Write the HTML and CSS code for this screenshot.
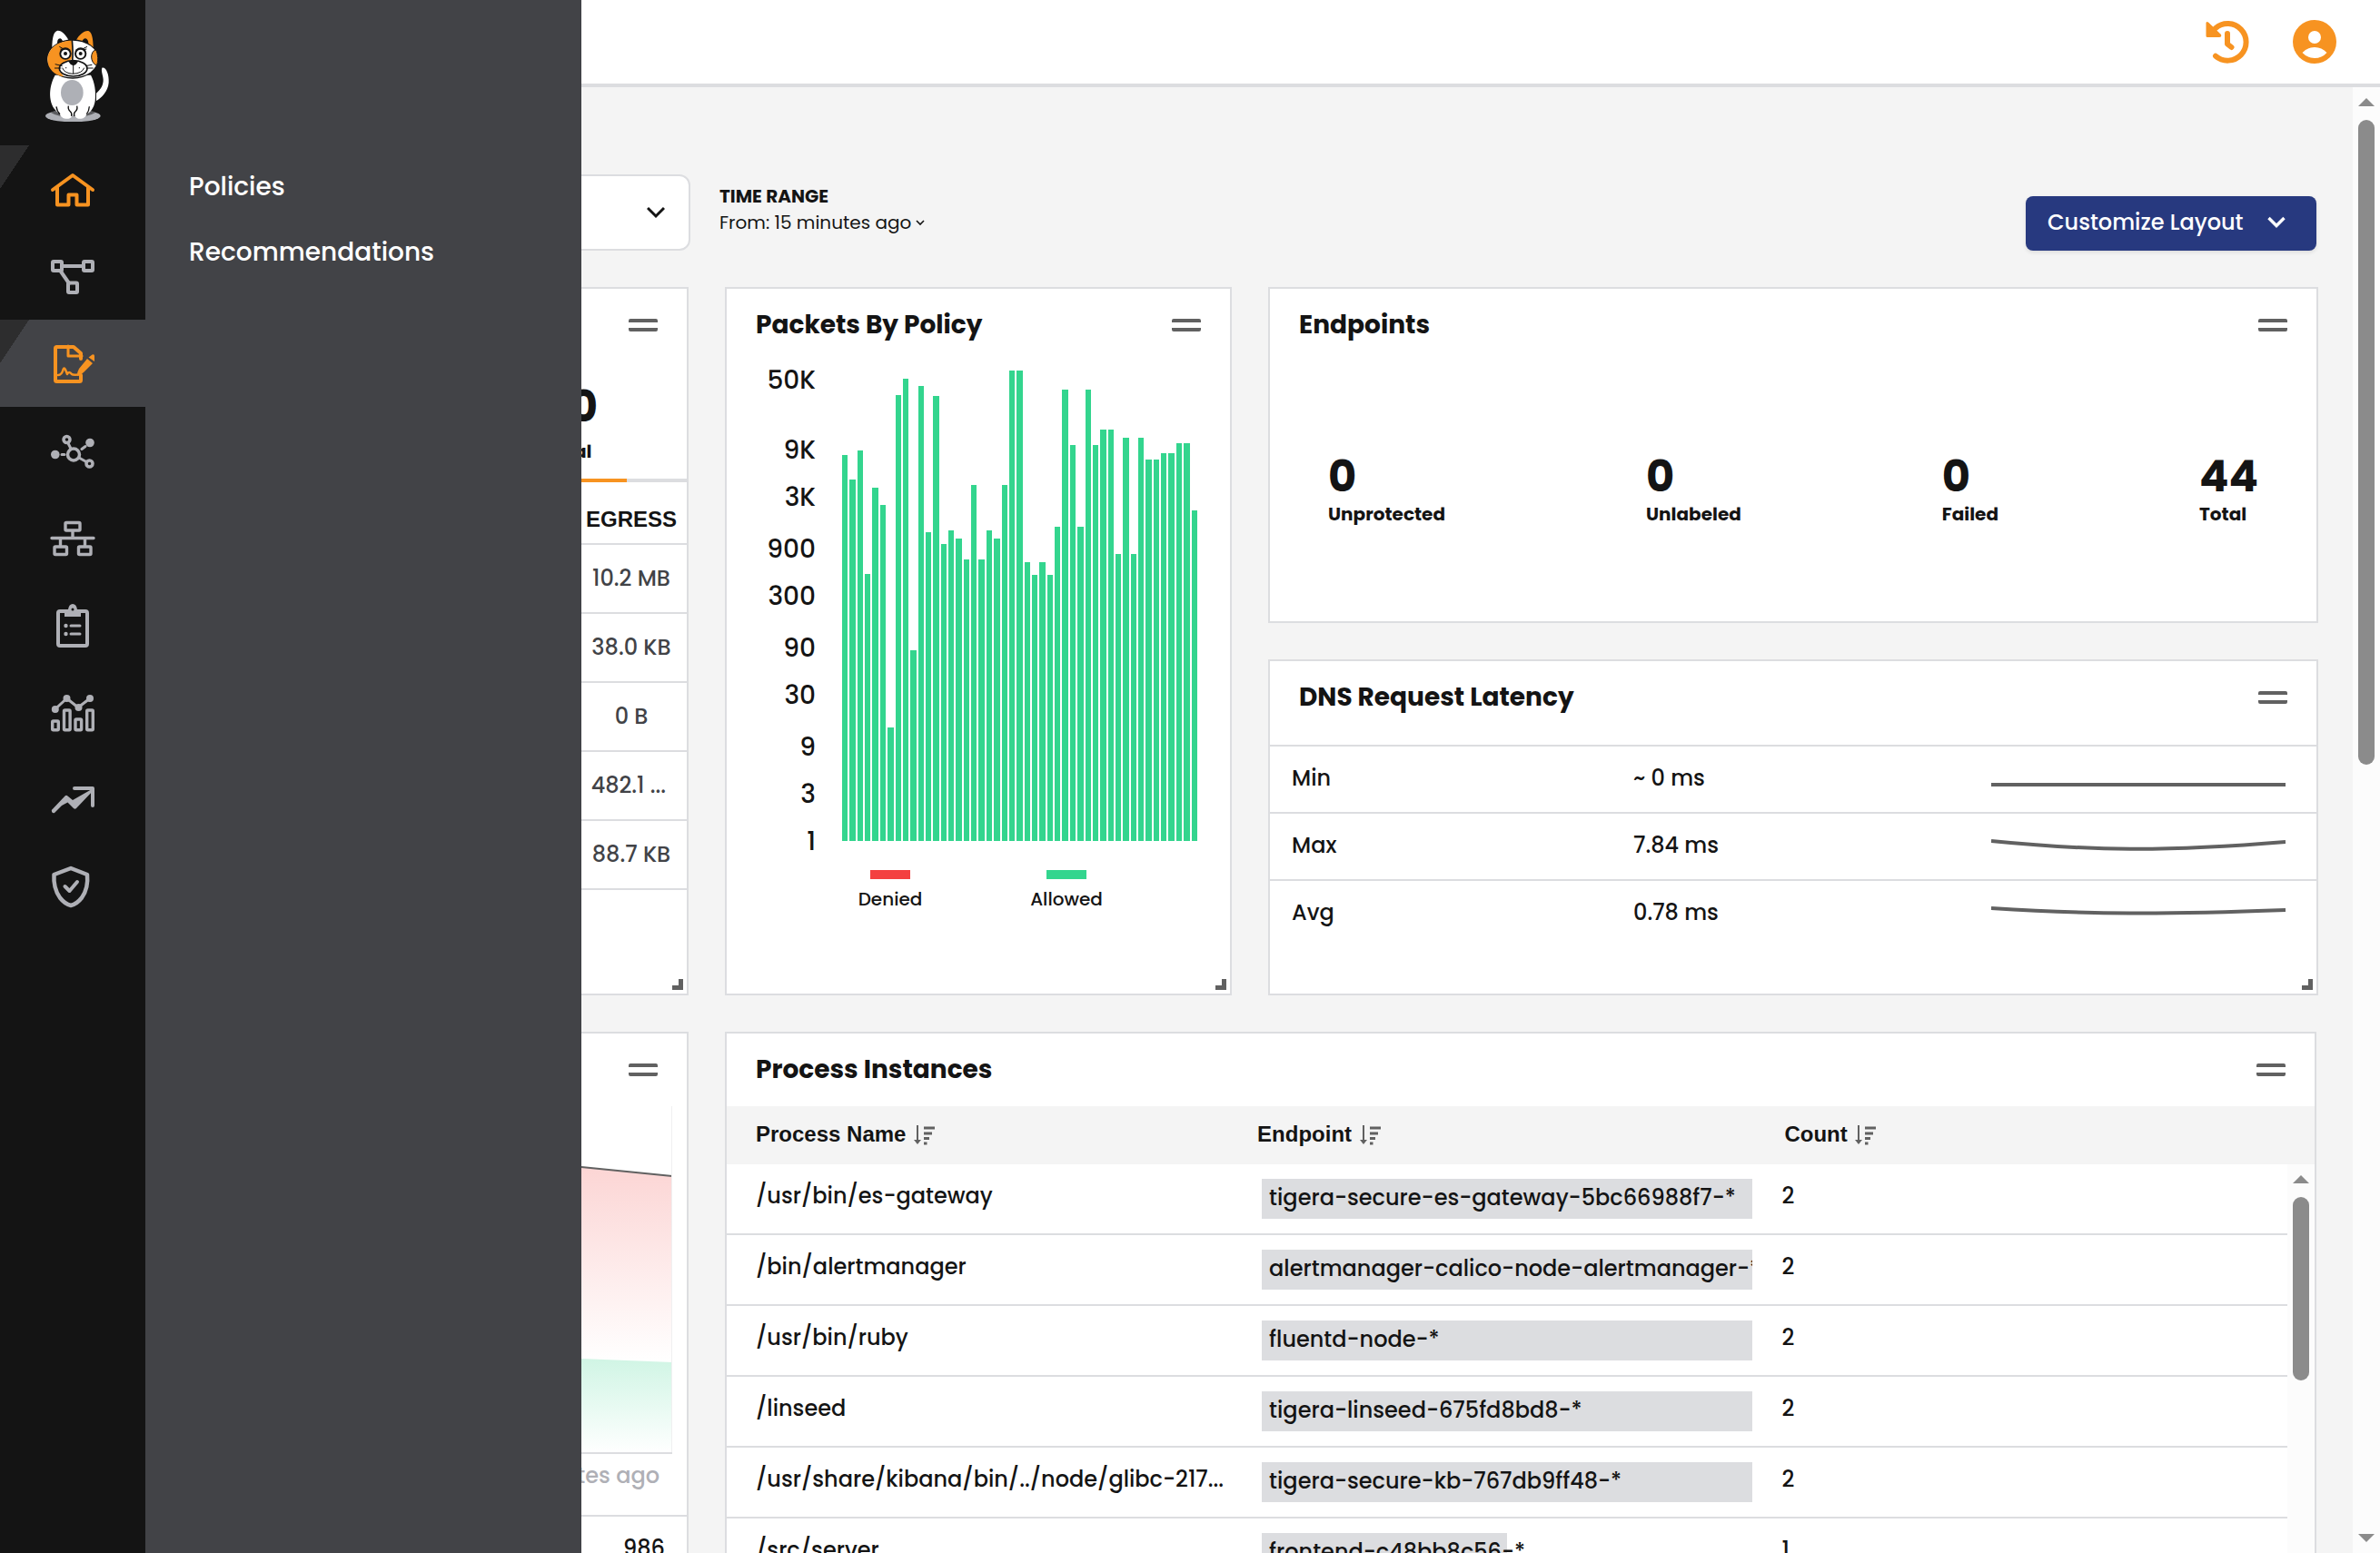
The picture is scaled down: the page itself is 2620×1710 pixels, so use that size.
FILE: index.html
```html
<!DOCTYPE html>
<html lang="en">
<head>
<meta charset="utf-8">
<meta name="viewport" content="width=device-width, initial-scale=1">
<title>Dashboard</title>
<link rel="stylesheet" href="styles.css">
</head>
<body>
<div class="app">
  <nav class="sidebar" aria-label="Main">
    <a class="logo" href="#" aria-label="Calico">
      <svg viewBox="0 0 270 330" width="90" height="110">
        <ellipse cx="121" cy="311" rx="91" ry="20" fill="#aeb0b6"/>
        <path d="M48 300Q60 290 80 300L80 312Q60 308 48 300ZM195 300Q182 290 162 300L162 312Q182 308 195 300Z" fill="#5c5d60"/>
        <path d="M217 152C229 148 241 172 239 201C237 230 214 252 198 261L198 236C213 224 222 208 221 190C220 175 213 163 217 152Z" fill="#fff"/>
        <path d="M62 176C42 210 38 262 62 290C68 298 74 302 78 305C82 322 110 326 118 312L122 308L128 312C136 326 162 322 166 305C178 300 190 286 194 262C198 230 192 198 180 176Z" fill="#fff"/>
        <ellipse cx="118" cy="234" rx="37" ry="42" fill="#aeb0b6"/>
        <path d="M66 280Q68 296 78 305M175 280Q174 296 166 305M106 278Q104 290 112 296Q119 302 116 312M134 278Q137 290 129 296Q122 302 126 312" fill="none" stroke="#141414" stroke-width="4"/>
        <path d="M52 88C52 50 58 34 68 30C82 27 96 42 106 60L88 66C84 54 76 50 70 62L68 78Z" fill="#fff"/>
        <path d="M188 88C188 50 182 34 172 30C158 28 142 42 132 60L150 66C156 52 166 50 171 64L173 78Z" fill="#f79321"/>
        <ellipse cx="120" cy="123" rx="86" ry="65" fill="#141414"/>
        <ellipse cx="120" cy="123" rx="83" ry="61" fill="#fff"/>
        <path d="M117 62C70 62 37 90 37 125C37 155 60 176 90 181L84 172C66 160 76 142 96 138L116 124C120 100 118 80 117 62Z" fill="#f79321"/>
        <path d="M196 92C204 104 206 134 198 144C178 134 176 100 196 92Z" fill="#f79321" stroke="#141414" stroke-width="3"/>
        <path d="M118 60C120 84 122 104 119 126" fill="none" stroke="#141414" stroke-width="5"/>
        <ellipse cx="122" cy="154" rx="46" ry="26" fill="#fff" stroke="#141414" stroke-width="5"/>
        <path d="M106 131Q122 124 138 131Q132 142 122 145Q112 142 106 131Z" fill="#141414"/>
        <path d="M122 143V172M86 152Q92 170 121 172Q152 170 158 152M62 140L86 146M60 153H82M162 146L184 142M164 153H188M76 82L90 90M80 90L92 92M168 82L152 90M166 90L152 92" fill="none" stroke="#141414" stroke-width="3"/>
        <circle cx="96" cy="105" r="20" fill="#141414"/><circle cx="96" cy="106" r="14" fill="#fff"/><circle cx="96" cy="105" r="6" fill="#141414"/>
        <circle cx="146" cy="105" r="20" fill="#141414"/><circle cx="146" cy="106" r="14" fill="#fff"/><circle cx="146" cy="105" r="6" fill="#141414"/>
        <circle cx="98" cy="152" r="2" fill="#141414"/><circle cx="142" cy="152" r="2" fill="#141414"/>
      </svg>
    </a>
    <a class="nav-item is-marked is-accent" href="#" aria-label="Dashboard">
      <svg viewBox="0 0 48 48" class="nav-icon"><path d="M2 25L24 9L46 25M7 22V41.500H19.500V30.500H28.500V41.500H41V22"/></svg>
    </a>
    <a class="nav-item" href="#" aria-label="Service graph">
      <svg viewBox="0 0 48 48" class="nav-icon"><rect x="2" y="8" width="10" height="10" rx="1"/><rect x="36" y="8" width="10" height="10" rx="1"/><rect x="19" y="31.500" width="10" height="10.500" rx="1"/><path d="M13 13H35M11 19L20 32"/></svg>
    </a>
    <a class="nav-item is-marked is-accent is-open" href="#" aria-label="Policies" aria-expanded="true">
      <svg viewBox="0 0 48 48" class="nav-icon"><path d="M33 37V42.500Q33 44 31.500 44H6.500Q5 44 5 42.500V7.500Q5 6 6.500 6H25L33 13V19"/><path d="M19 5V16H34" stroke-width="3"/><path d="M8 37Q12 37 13.500 31Q14.500 28 16 31L18 36Q20 32 23 36Q24 37 30 36.500" stroke-width="2.500"/><path class="solid" d="M29 38Q29 33 31 30L40 19L46 24L36 34Q33 37 29 38ZM41.500 17.500L45.500 14.500Q48 13.500 48 16V22Z"/></svg>
    </a>
    <a class="nav-item" href="#" aria-label="Endpoints">
      <svg viewBox="0 0 48 48" class="nav-icon"><circle cx="25" cy="28.500" r="6.500" stroke-width="3.500"/><circle cx="17.500" cy="12" r="3.500" stroke-width="3.500"/><circle cx="42.500" cy="38.500" r="3.500" stroke-width="3.500"/><circle class="solid" cx="43" cy="15.500" r="4.800"/><circle class="solid" cx="4.800" cy="28.500" r="4.800"/><path d="M19 16L22 22M31 32L39 36.500M12 28.500H15M34 22.500L38 19.500" stroke-width="3"/></svg>
    </a>
    <a class="nav-item" href="#" aria-label="Networks">
      <svg viewBox="0 0 48 48" class="nav-icon"><g stroke-width="3.400"><rect x="16" y="7.500" width="16" height="8.500" rx="1"/><rect x="4" y="34" width="13.500" height="8.500" rx="1"/><rect x="30.500" y="34" width="13.500" height="8.500" rx="1"/><path d="M1 24.500H47M24 17V24M10.500 25V33M37.500 25V33"/></g></svg>
    </a>
    <a class="nav-item" href="#" aria-label="Compliance">
      <svg viewBox="0 0 48 48" class="nav-icon"><rect x="8" y="9" width="32" height="38" rx="2"/><path class="solid" d="M15 7H19Q20 1 24 1Q28 1 29 7H33V15H15Z"/><circle cx="24" cy="7" r="1.500" fill="#141414" stroke="none"/><circle class="solid" cx="16.500" cy="25" r="2.200"/><circle class="solid" cx="16.500" cy="34" r="2.200"/><path d="M22 25H32M22 34H32" stroke-width="3"/></svg>
    </a>
    <a class="nav-item" href="#" aria-label="Activity">
      <svg viewBox="0 0 48 48" class="nav-icon"><path d="M4.500 21L17.500 9L30 19L43 9" stroke-width="3"/><g class="solid"><circle cx="4.800" cy="21" r="4"/><circle cx="17.500" cy="9" r="4"/><circle cx="30.500" cy="19" r="4"/><circle cx="43" cy="9" r="4"/></g><g stroke-width="3.400"><rect x="1.700" y="34" width="6.600" height="9.800" rx="1"/><rect x="14.500" y="22" width="6.600" height="21.800" rx="1"/><rect x="27" y="32" width="6.600" height="11.800" rx="1"/><rect x="39.700" y="22" width="6.600" height="21.800" rx="1"/></g></svg>
    </a>
    <a class="nav-item" href="#" aria-label="Threats">
      <svg viewBox="0 0 48 48" class="nav-icon"><path d="M26 12H46V31"/><path class="solid" d="M.8 36L15.500 20.500Q17 19 18.500 20.500L24 25L45 13L47 14L28 34Q26.500 35.500 25 34L18.500 27.500L12 31L4 39Q1 40 .8 36Z"/></svg>
    </a>
    <a class="nav-item" href="#" aria-label="Security">
      <svg viewBox="0 0 48 48" class="nav-icon"><path d="M22 4L40 11Q41.500 26 34 36.500Q28.500 43.500 22 45Q15.500 43.500 10 36.500Q2.500 26 3.500 11Z" stroke-width="4.500"/><path d="M15.500 24L20.500 29L29 19" stroke-width="4"/></svg>
    </a>
  </nav>

  <div class="flyout">
    <a href="#">Policies</a>
    <a href="#">Recommendations</a>
  </div>

  <div class="page">
    <header class="topbar">
      <button class="icon-button" aria-label="History">
        <svg viewBox="0 0 48 48" width="48" height="48"><path d="M11 9A20.300 20.300 0 1 1 11 39.700" fill="none" stroke="#f79321" stroke-width="6" stroke-linecap="round"/><path d="M.5 3.500Q.5 1 3 2.500L17 16Q18 19 15 19H2Q.5 19 .5 17.500Z" fill="#f79321"/><path d="M24 15V26.500L28.500 30" fill="none" stroke="#f79321" stroke-width="6" stroke-linecap="round" stroke-linejoin="round"/></svg>
      </button>
      <button class="icon-button" aria-label="Account">
        <svg viewBox="0 0 48 48" width="48" height="48"><circle cx="24" cy="24" r="24" fill="#f79321"/><circle cx="24" cy="19" r="7" fill="#fff"/><path d="M10.500 36Q16 30 24 30Q32 30 37.500 36Q32 42 24 42Q16 42 10.500 36Z" fill="#fff"/></svg>
      </button>
    </header>

    <div class="viewport">
      <main class="content">
        <div class="toolbar">
          <div class="picker">
            <select aria-label="Cluster"><option></option></select>
            <svg viewBox="0 0 20 16" width="20" height="16"><path d="M1 3L10 12L19 3" fill="none" stroke="#141414" stroke-width="3"/></svg>
          </div>
          <div class="time-range">
            <span class="time-label">TIME RANGE</span>
            <button class="time-value">From: 15 minutes ago<svg viewBox="0 0 10 8" width="10" height="8"><path d="M1 2L5 6L9 2" fill="none" stroke="#141414" stroke-width="1.600"/></svg></button>
          </div>
          <button class="primary">Customize Layout <svg viewBox="0 0 20 14" width="20" height="14"><path d="M1.500 2L10 10.500L18.500 2" fill="none" stroke="#fff" stroke-width="3.400"/></svg></button>
        </div>

        <div class="board">
          <section class="card tall">
            <div class="card-head"><span class="grip"></span></div>
            <div class="stats flow-stats"><div class="stat"><strong>20</strong><span>Total</span></div></div>
            <div class="tab-line"><span style="width:88%"></span></div>
            <table class="flow-table">
              <colgroup><col><col class="egress-col"></colgroup>
              <thead><tr><td></td><th scope="col">EGRESS</th></tr></thead>
              <tbody>
                <tr><td></td><td>10.2 MB</td></tr>
                <tr><td></td><td>38.0 KB</td></tr>
                <tr><td></td><td>0 B</td></tr>
                <tr><td></td><td>482.1 ...&nbsp;</td></tr>
                <tr><td></td><td>88.7 KB</td></tr>
              </tbody>
            </table>
            <span class="resize"></span>
          </section>

          <section class="card tall">
            <div class="card-head"><h2>Packets By Policy</h2><span class="grip"></span></div>
            <div class="chart">
              <svg class="axis" width="98" height="548" viewBox="0 0 98 548">
                <g text-anchor="end">
                  <text x="98" y="30">50K</text><text x="98" y="107">9K</text><text x="98" y="159">3K</text><text x="98" y="216">900</text><text x="98" y="268">300</text><text x="98" y="325">90</text><text x="98" y="377">30</text><text x="98" y="434">9</text><text x="98" y="486">3</text><text x="98" y="538">1</text>
                </g>
              </svg>
              <div class="bars">
                <i style="height:425px"></i><i style="height:398px"></i><i style="height:430px"></i><i style="height:294px"></i><i style="height:389px"></i><i style="height:370px"></i><i style="height:125px"></i><i style="height:491px"></i><i style="height:509px"></i><i style="height:210px"></i><i style="height:501px"></i><i style="height:340px"></i><i style="height:490px"></i><i style="height:327px"></i><i style="height:342px"></i><i style="height:333px"></i><i style="height:310px"></i><i style="height:392px"></i><i style="height:310px"></i><i style="height:342px"></i><i style="height:333px"></i><i style="height:392px"></i><i style="height:518px"></i><i style="height:518px"></i><i style="height:307px"></i><i style="height:293px"></i><i style="height:307px"></i><i style="height:293px"></i><i style="height:346px"></i><i style="height:497px"></i><i style="height:436px"></i><i style="height:346px"></i><i style="height:497px"></i><i style="height:436px"></i><i style="height:453px"></i><i style="height:453px"></i><i style="height:316px"></i><i style="height:444px"></i><i style="height:316px"></i><i style="height:444px"></i><i style="height:420px"></i><i style="height:420px"></i><i style="height:427px"></i><i style="height:427px"></i><i style="height:438px"></i><i style="height:438px"></i><i style="height:364px"></i>
              </div>
            </div>
            <ul class="legend"><li class="denied">Denied</li><li class="allowed">Allowed</li></ul>
            <span class="resize"></span>
          </section>

          <section class="card double">
            <div class="card-head"><h2>Endpoints</h2><span class="grip"></span></div>
            <div class="stats endpoint-stats">
              <div class="stat"><strong>0</strong><span>Unprotected</span></div>
              <div class="stat"><strong>0</strong><span>Unlabeled</span></div>
              <div class="stat"><strong>0</strong><span>Failed</span></div>
              <div class="stat"><strong>44</strong><span>Total</span></div>
            </div>
          </section>

          <section class="card double">
            <div class="card-head"><h2>DNS Request Latency</h2><span class="grip"></span></div>
            <table class="dns-table">
              <tbody>
                <tr><th scope="row">Min</th><td>~ 0 ms</td><td class="spark"><svg viewBox="0 0 324 72" preserveAspectRatio="none"><path d="M0 42H324"/></svg></td></tr>
                <tr><th scope="row">Max</th><td>7.84 ms</td><td class="spark"><svg viewBox="0 0 324 72" preserveAspectRatio="none"><path d="M0 30C110 41 190 42 324 31"/></svg></td></tr>
                <tr><th scope="row">Avg</th><td>0.78 ms</td><td class="spark"><svg viewBox="0 0 324 72" preserveAspectRatio="none"><path d="M0 30C110 37 190 37 324 32"/></svg></td></tr>
              </tbody>
            </table>
            <span class="resize"></span>
          </section>

          <section class="card tall">
            <div class="card-head"><span class="grip"></span></div>
            <svg class="area" viewBox="0 0 538 384" preserveAspectRatio="none">
              <defs>
                <linearGradient id="red" x1="0" y1="0" x2="0" y2="1"><stop offset="0" stop-color="#fbcccb"/><stop offset="1" stop-color="#fff"/></linearGradient>
                <linearGradient id="green" x1="0" y1="0" x2="0" y2="1"><stop offset="0" stop-color="#c8f3e0"/><stop offset="1" stop-color="#fff"/></linearGradient>
              </defs>
              <path d="M0 20L438 67L538 77V282L0 266Z" fill="url(#red)"/>
              <path d="M0 260L438 278L538 282V382H0Z" fill="url(#green)"/>
              <path d="M0 20L438 67L538 77" fill="none" stroke="#616161" stroke-width="2"/>
              <path d="M537.500 0V382" stroke="#f0f0f1"/>
              <path d="M0 382H538" stroke="#dcdde0" stroke-width="2"/>
            </svg>
            <div class="area-caption">15 minutes ago</div>
            <div class="area-row">986</div>
          </section>

          <section class="card tall triple">
            <div class="card-head"><h2>Process Instances</h2><span class="grip"></span></div>
            <div class="process">
              <table class="process-table">
                <colgroup><col class="name-col"><col class="endpoint-col"><col><col class="rail-col"></colgroup>
                <thead>
                  <tr>
                    <th scope="col">Process Name <svg class="sort" viewBox="0 0 24 24"><path d="M4 1V20" stroke-width="2"/><path d="M0 17H8L4 22Z" fill="#616161" stroke="none"/><path d="M11 4H23M11 10H20M11 15.500H17M11 21H14.500" stroke-width="3"/></svg></th>
                    <th scope="col">Endpoint <svg class="sort" viewBox="0 0 24 24"><path d="M4 1V20" stroke-width="2"/><path d="M0 17H8L4 22Z" fill="#616161" stroke="none"/><path d="M11 4H23M11 10H20M11 15.500H17M11 21H14.500" stroke-width="3"/></svg></th>
                    <th scope="col">Count <svg class="sort" viewBox="0 0 24 24"><path d="M4 1V20" stroke-width="2"/><path d="M0 17H8L4 22Z" fill="#616161" stroke="none"/><path d="M11 4H23M11 10H20M11 15.500H17M11 21H14.500" stroke-width="3"/></svg></th>
                    <td></td>
                  </tr>
                </thead>
                <tbody>
                  <tr><td>/usr/bin/es-gateway</td><td><div class="meter"><span style="width:100%">tigera-secure-es-gateway-5bc66988f7-*</span></div></td><td>2</td><td></td></tr>
                  <tr><td>/bin/alertmanager</td><td><div class="meter"><span style="width:100%">alertmanager-calico-node-alertmanager-*</span></div></td><td>2</td><td></td></tr>
                  <tr><td>/usr/bin/ruby</td><td><div class="meter"><span style="width:100%">fluentd-node-*</span></div></td><td>2</td><td></td></tr>
                  <tr><td>/linseed</td><td><div class="meter"><span style="width:100%">tigera-linseed-675fd8bd8-*</span></div></td><td>2</td><td></td></tr>
                  <tr><td>/usr/share/kibana/bin/../node/glibc-217...</td><td><div class="meter"><span style="width:100%">tigera-secure-kb-767db9ff48-*</span></div></td><td>2</td><td></td></tr>
                  <tr><td>/src/server</td><td><div class="meter"><span style="width:50%">frontend-c48bb8c56-*</span></div></td><td>1</td><td></td></tr>
                </tbody>
              </table>
              <div class="scrollbar inner-bar"><span class="up"></span><span class="thumb"></span></div>
            </div>
          </section>
        </div>
      </main>
      <div class="scrollbar page-bar"><span class="up"></span><span class="thumb"></span><span class="down"></span></div>
    </div>
  </div>
</div>
</body>
</html>
```
FILE: styles.css
```css
:root {
  --ink: #141414;
  --slate: #424347;
  --line: #dcdde0;
  --grey: #616161;
  --orange: #f79321;
  --green: #33d58e;
}

* { box-sizing: border-box; }

body {
  margin: 0;
  font: 500 24px/32px Poppins, Inter, "Liberation Sans", sans-serif;
  color: var(--ink);
  background: #f4f4f4;
}

a { color: inherit; text-decoration: none; }
button { border: 0; padding: 0; background: none; font: inherit; color: inherit; }
table { border-collapse: separate; border-spacing: 0; table-layout: fixed; width: 100%; }
th, td { padding: 0; text-align: left; font-weight: inherit; }

.app { display: flex; height: 100vh; position: relative; overflow: hidden; }

/* Sidebar */
.sidebar { width: 160px; flex: none; background: var(--ink); display: flex; flex-direction: column; }
.logo { display: block; height: 160px; padding: 24px 30px 26px 40px; }
.logo svg { display: block; }
.nav-item { height: 96px; display: grid; place-items: center; color: #afb0b6; }
.nav-item.is-accent { color: var(--orange); }
.nav-item.is-marked { background: linear-gradient(to bottom right, #2d2d2e 50%, transparent 50%) no-repeat 0 0 / 32px 48px; }
.nav-item.is-open { background-color: var(--slate); }
.nav-icon { width: 48px; height: 48px; overflow: visible; fill: none; stroke: currentColor; stroke-width: 4; stroke-linecap: round; stroke-linejoin: round; }
.solid { fill: currentColor; stroke: none; }

.flyout {
  position: absolute; z-index: 2; left: 160px; top: 0; bottom: 0; width: 480px;
  padding: 186px 48px; background: var(--slate); color: #fff;
  display: flex; flex-direction: column; gap: 32px;
  font-size: 28px; line-height: 40px;
}

/* Page frame */
.page { flex: 1; min-width: 0; display: flex; flex-direction: column; }
.topbar {
  flex: none; height: 96px; padding: 0 48px; background: #fff; border-bottom: 4px solid var(--line);
  display: flex; justify-content: flex-end; align-items: center; gap: 48px;
}
.icon-button { width: 48px; height: 48px; }
.icon-button svg { display: block; }
.viewport { flex: 1; min-height: 0; display: flex; }
.content { flex: 1; min-width: 0; overflow: hidden; padding: 96px 38px 0 40px; }

/* Toolbar */
.toolbar { display: flex; height: 84px; margin-bottom: 40px; padding-right: 2px; }
.picker { display: grid; width: 560px; align-items: center; }
.picker select {
  grid-area: 1 / 1; height: 84px; width: 100%; appearance: none;
  background: #fff; border: 2px solid var(--line); border-radius: 12px; font: inherit;
}
.picker svg { grid-area: 1 / 1; justify-self: end; margin-right: 28px; pointer-events: none; }
.time-range { padding: 10px 0 0 32px; font-size: 20px; line-height: 28px; display: flex; flex-direction: column; align-items: flex-start; gap: 1px; }
.time-label { font-weight: 700; }
.time-value { font-weight: 400; display: flex; align-items: center; gap: 5px; }
.primary {
  margin-left: auto; align-self: flex-end; width: 320px; height: 60px; padding: 0 34px 2px 24px;
  display: flex; align-items: center; justify-content: space-between;
  background: #27397f; color: #fff; border-radius: 8px; font-size: 24px; box-shadow: 0 2px 4px #0000001a;
}

/* Cards */
.board { display: grid; grid-template-columns: repeat(4, minmax(0, 1fr)); grid-auto-rows: 370px; gap: 40px; }
.card { position: relative; background: #fff; border: 2px solid var(--line); overflow: hidden; }
.tall { grid-row: span 2; }
.double { grid-column: span 2; }
.triple { grid-column: span 3; margin-right: 2px; }
.card-head { height: 80px; padding: 0 32px; display: flex; align-items: center; }
.card-head h2 { margin: 0; font-size: 28px; line-height: 40px; font-weight: 700; }
.grip { margin-left: auto; width: 32px; height: 14px; border: solid var(--grey); border-width: 4px 0; border-radius: 2px; }
.resize { position: absolute; right: 4px; bottom: 4px; width: 12px; height: 12px; border: solid var(--grey); border-width: 0 5px 5px 0; }

.stats { display: flex; justify-content: space-between; }
.stat { display: flex; flex-direction: column; }
.stat strong { font-size: 48px; line-height: 54px; font-weight: 700; }
.stat span { font-size: 20px; line-height: 28px; font-weight: 700; }
.endpoint-stats { padding: 100px 64px 0; }
.flow-stats { height: 129px; padding: 23px 98px 0 0; justify-content: flex-end; }
.flow-stats .stat { gap: 8px; }

.tab-line { height: 4px; background: var(--line); }
.tab-line span { display: block; height: 4px; background: var(--orange); }
.flow-table { color: var(--slate); }
.flow-table th, .flow-table td { height: 76px; padding-bottom: 1px; border-bottom: 2px solid var(--line); text-align: center; }
.flow-table thead th, .flow-table thead td { height: 69px; padding-top: 16px; color: var(--ink); font: 700 24px/32px "Liberation Sans", sans-serif; }
.egress-col { width: 122px; }

/* Packets chart */
.chart { display: flex; }
.axis { flex: none; font-size: 28px; fill: var(--ink); }
.bars { flex: 1; display: flex; align-items: flex-end; gap: 2px; height: 518px; margin: 10px 36px 0 29px; }
.bars i { flex: 1; background: var(--green); }
.legend { list-style: none; margin: 12px 0 0; padding: 0; display: flex; justify-content: center; font-size: 20px; line-height: 28px; }
.legend li { width: 194px; display: flex; flex-direction: column; align-items: center; gap: 8px; }
.legend li::before { content: ""; width: 44px; height: 10px; background: var(--green); }
.legend .denied::before { background: #f44040; }

/* DNS */
.dns-table { margin-top: 12px; border-top: 2px solid var(--line); }
.dns-table th, .dns-table td { height: 74px; padding: 0 0 2px 16px; border-bottom: 2px solid var(--line); }
.dns-table th { padding-left: 24px; }
.dns-table tr:last-child > * { border-bottom-color: transparent; }
.dns-table .spark { padding: 0 34px 0 26px; }
.spark svg { display: block; width: 100%; height: 72px; fill: none; stroke: var(--grey); stroke-width: 4; }

/* Traffic area chart */
.area { display: block; height: 384px; width: calc(100% - 16px); }
.area-caption { height: 66px; padding-right: 30px; text-align: right; line-height: 46px; color: #afb0b6; }
.area-row { border-top: 2px solid var(--line); padding-right: 24px; text-align: right; line-height: 70px; }

/* Processes */
.process { position: relative; }
.name-col { width: 32.5%; }
.endpoint-col { width: 33.2%; }
.rail-col { width: 30px; }
.process-table thead { background: #f4f4f4; }
.process-table thead > tr > * { height: 64px; padding: 0 0 2px 16px; font: 700 24px/32px "Liberation Sans", sans-serif; }
.process-table tr > :first-child { padding-left: 32px; }
.process-table tbody td { height: 78px; border-bottom: 2px solid var(--line); padding: 0 0 6px 13px; white-space: nowrap; }
.process-table tbody td:nth-child(2) { padding: 0 19px 0 21px; }
.process-table tbody td:last-child { border-bottom: 0; }
.sort { width: 24px; height: 24px; margin-left: 2px; vertical-align: -5px; fill: none; stroke: var(--grey); }
.meter { overflow: hidden; }
.meter span { display: block; height: 44px; line-height: 42px; padding-left: 8px; background: var(--line); white-space: nowrap; }

/* Scrollbars */
.scrollbar { width: 30px; padding: 12px 6px; background: #fcfcfc; display: flex; flex-direction: column; gap: 15px; }
.scrollbar .up, .scrollbar .down { height: 9px; background: #8b8b8b; clip-path: polygon(50% 0, 100% 100%, 0 100%); }
.scrollbar .down { margin-top: auto; clip-path: polygon(0 0, 100% 0, 50% 100%); }
.scrollbar .thumb { border-radius: 9px; background: #8b8b8b; height: 202px; }
.page-bar { flex: none; }
.page-bar .thumb { height: 710px; }
.inner-bar { position: absolute; right: 0; top: 64px; bottom: 0; }
```
